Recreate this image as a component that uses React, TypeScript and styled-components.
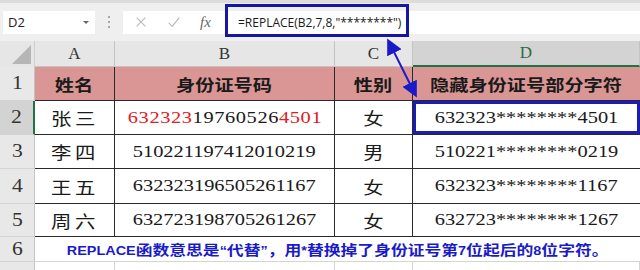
import styled, { createGlobalStyle } from 'styled-components';

const serif = `"Liberation Serif", "Noto Sans CJK SC", serif`;
const cjk = `"Liberation Serif", "Noto Sans CJK SC", sans-serif`;
const ui = `"Open Sans", "Liberation Sans", sans-serif`;

const GlobalStyle = createGlobalStyle`
  html, body {
    margin: 0;
    padding: 0;
    background: #ffffff;
  }
  body {
    width: 640px;
    height: 270px;
    overflow: hidden;
  }
`;

type Row = {
  num: string;
  name: string;
  id: string;
  redHead?: number;
  redTail?: number;
  sex: string;
  masked: string;
};

const rows: Row[] = [
  { num: '2', name: '张三', id: '632323197605264501', redHead: 6, redTail: 4, sex: '女', masked: '632323********4501' },
  { num: '3', name: '李四', id: '510221197412010219', sex: '男', masked: '510221********0219' },
  { num: '4', name: '王五', id: '632323196505261167', sex: '女', masked: '632323********1167' },
  { num: '5', name: '周六', id: '632723198705261267', sex: '女', masked: '632723********1267' },
];

export default function App() {
  return (
    <Page>
      <GlobalStyle />
      <FormulaBar>
        <NameBox>
          <span>D2</span>
          <DropArrow />
        </NameBox>
        <Grip>
          <i />
          <i />
          <i />
        </Grip>
        <FormulaInput>
          <ToolIcon viewBox="0 0 16 16">
            <path d="M3 3 L13 13 M13 3 L3 13" />
          </ToolIcon>
          <ToolIcon viewBox="0 0 16 16">
            <path d="M2 9 L6 13 L14 3" />
          </ToolIcon>
          <Fx>fx</Fx>
          <FormulaText>=REPLACE(B2,7,8,"********")</FormulaText>
        </FormulaInput>
        <Highlight />
      </FormulaBar>

      <Sheet>
        <Corner>
          <CornerTriangle />
        </Corner>
        <ColHead>A</ColHead>
        <ColHead>B</ColHead>
        <ColHead>C</ColHead>
        <ColHead $active>D</ColHead>

        <RowHead>
          <Stretch>1</Stretch>
        </RowHead>
        <HeadCell>
          <Stretch>姓名</Stretch>
        </HeadCell>
        <HeadCell>
          <Stretch>身份证号码</Stretch>
        </HeadCell>
        <HeadCell>
          <Stretch>性别</Stretch>
        </HeadCell>
        <HeadCell $last>
          <Stretch>隐藏身份证号部分字符</Stretch>
        </HeadCell>

        {rows.map((r) => (
          <RowGroup key={r.num} r={r} />
        ))}

        <RowHead>
          <Stretch>6</Stretch>
        </RowHead>
        <NoteCell>
          <NoteText>
            <Latin>REPLACE</Latin>函数意思是<Latin>“</Latin>代替<Latin>”</Latin>，用<Latin>*</Latin>替换掉了身份证号第<Latin>7</Latin>位起后的<Latin>8</Latin>位字符。
          </NoteText>
        </NoteCell>

        <RowHead $tail />
        <BlankCell />
        <BlankCell />
        <BlankCell />
        <BlankCell />
      </Sheet>

      <Arrow width="640" height="270" viewBox="0 0 640 270">
        <defs>
          <marker id="head" markerWidth="8" markerHeight="8" refX="6" refY="4" orient="auto-start-reverse">
            <path d="M0 0 L8 4 L0 8 Z" fill="#1a1ac8" />
          </marker>
        </defs>
        <line x1="389" y1="42" x2="415" y2="94" stroke="#1a1ac8" strokeWidth="2" markerStart="url(#head)" markerEnd="url(#head)" />
      </Arrow>
    </Page>
  );
}

function IdText({ r }: { r: Row }) {
  if (!r.redHead) return <>{r.id}</>;
  const head = r.id.slice(0, r.redHead);
  const mid = r.id.slice(r.redHead, r.id.length - (r.redTail ?? 0));
  const tail = r.id.slice(r.id.length - (r.redTail ?? 0));
  return (
    <>
      <Red>{head}</Red>
      {mid}
      <Red>{tail}</Red>
    </>
  );
}

function RowGroup({ r }: { r: Row }) {
  const active = r.num === '2';
  return (
    <>
      <RowHead $active={active}>
        <Stretch>{r.num}</Stretch>
      </RowHead>
      <DataCell>
        <Stretch $gap>{r.name}</Stretch>
      </DataCell>
      <DataCell>
        <Stretch $wide={active}>
          <IdText r={r} />
        </Stretch>
      </DataCell>
      <DataCell>
        <Stretch>{r.sex}</Stretch>
      </DataCell>
      <DataCell $last $selected={active}>
        <Stretch>{r.masked}</Stretch>
      </DataCell>
    </>
  );
}

const Page = styled.div`
  position: relative;
  width: 640px;
  height: 270px;
  overflow: hidden;
  background: #ffffff;
`;

const FormulaBar = styled.div`
  position: relative;
  display: flex;
  align-items: center;
  height: 41px;
  padding: 0 0 0 3px;
  box-sizing: border-box;
  background: #efefef;
  border-top: 3px solid #dcdcdc;
`;

const NameBox = styled.div`
  display: flex;
  align-items: center;
  justify-content: space-between;
  width: 92px;
  height: 23px;
  padding: 0 6px 0 5px;
  box-sizing: border-box;
  background: #ffffff;
  font-family: ${ui};
  font-size: 13px;
  color: #222;
`;

const DropArrow = styled.span`
  width: 0;
  height: 0;
  border-left: 3px solid transparent;
  border-right: 3px solid transparent;
  border-top: 3px solid #666;
`;

const Grip = styled.div`
  display: flex;
  flex-direction: column;
  gap: 3px;
  width: 28px;
  align-items: center;

  i {
    width: 2px;
    height: 2px;
    background: #a8a8a8;
  }
`;

const FormulaInput = styled.div`
  display: flex;
  align-items: center;
  flex: 1;
  height: 23px;
  padding-left: 11px;
  background: #ffffff;
`;

const ToolIcon = styled.svg`
  width: 14px;
  height: 14px;
  margin-right: 19px;
  fill: none;
  stroke: #b8b8b8;
  stroke-width: 1.3;
`;

const Fx = styled.span`
  font-family: ${serif};
  font-style: italic;
  font-size: 15px;
  color: #666;
  width: 38px;
`;

const FormulaText = styled.span`
  font-family: ${ui};
  font-size: 12px;
  color: #1a1a1a;
`;

const Highlight = styled.div`
  position: absolute;
  left: 225px;
  top: 1px;
  width: 184px;
  height: 33px;
  box-sizing: border-box;
  border: 3px solid #1616a6;
`;

const Sheet = styled.div`
  display: grid;
  grid-template-columns: 35px 80px 220px 78px 227px;
  grid-template-rows: 26px 34px 34px 34px 35px 33px 25px 20px;
`;

const Corner = styled.div`
  position: relative;
  background: #e6e6e6;
  border-right: 1px solid #cfcfcf;
`;

const CornerTriangle = styled.span`
  position: absolute;
  right: 3px;
  bottom: 3px;
  width: 0;
  height: 0;
  border-left: 19px solid transparent;
  border-bottom: 19px solid #b6b6b6;
`;

const ColHead = styled.div<{ $active?: boolean }>`
  display: flex;
  align-items: center;
  justify-content: center;
  box-sizing: border-box;
  background: ${({ $active }) => ($active ? '#d3d3d3' : '#e6e6e6')};
  border-right: 1px solid #c4c4c4;
  border-bottom: ${({ $active }) => ($active ? '2px solid #217346' : '1px solid #c4c4c4')};
  font-family: ${serif};
  font-size: 17px;
  color: ${({ $active }) => ($active ? '#2c6a45' : '#333')};
`;

const RowHead = styled.div<{ $active?: boolean; $tail?: boolean }>`
  display: flex;
  align-items: center;
  justify-content: center;
  box-sizing: border-box;
  background: ${({ $active }) => ($active ? '#d3d3d3' : '#e8e8e8')};
  border-right: ${({ $active }) => ($active ? '2px solid #217346' : '1px solid #c4c4c4')};
  border-bottom: ${({ $tail }) => ($tail ? 'none' : '1px solid #d4d4d4')};
  font-family: ${serif};
  font-size: 18px;
  color: #333;
`;

const Cell = styled.div<{ $last?: boolean }>`
  display: flex;
  align-items: center;
  justify-content: center;
  box-sizing: border-box;
  overflow: hidden;
  border-right: ${({ $last }) => ($last ? 'none' : '1px solid #2a2a2a')};
  border-bottom: 1px solid #2a2a2a;
  font-family: ${cjk};
  color: #1a1a1a;
`;

const HeadCell = styled(Cell)`
  background: #d99694;
  font-size: 16px;
  font-weight: 700;
`;

const DataCell = styled(Cell)<{ $selected?: boolean }>`
  background: #ffffff;
  font-size: 17px;
  box-shadow: ${({ $selected }) => ($selected ? 'inset 0 0 0 3px #1c1cb4' : 'none')};
`;

const Stretch = styled.span<{ $gap?: boolean; $wide?: boolean }>`
  display: inline-block;
  white-space: nowrap;
  transform: scaleX(1.2);
  letter-spacing: ${({ $gap, $wide }) => ($gap ? '3px' : $wide ? '0.5px' : '0')};
`;

const Red = styled.span`
  color: #e0201e;
`;

const NoteCell = styled.div`
  grid-column: 2 / 6;
  display: flex;
  align-items: center;
  justify-content: center;
  border-bottom: 1px solid #d4d4d4;
`;

const NoteText = styled.span`
  display: inline-block;
  white-space: nowrap;
  font-family: "Noto Sans CJK SC", sans-serif;
  font-size: 14px;
  font-weight: 700;
  color: #1a1ac8;
  transform: scaleX(1.2);
`;

const Latin = styled.span`
  font-family: "Liberation Sans", sans-serif;
  font-size: 12px;
`;

const BlankCell = styled.div`
  border-right: 1px solid #d4d4d4;
`;

const Arrow = styled.svg`
  position: absolute;
  left: 0;
  top: 0;
  pointer-events: none;
`;
